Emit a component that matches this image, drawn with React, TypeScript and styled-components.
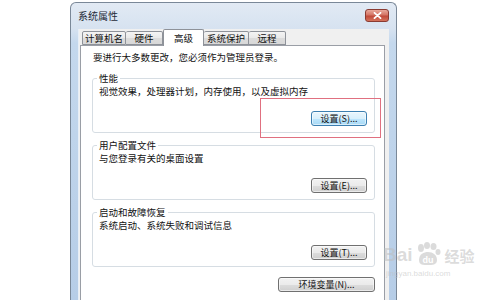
import React from 'react';
import styled, { createGlobalStyle } from 'styled-components';

const GlobalStyle = createGlobalStyle`
  html, body {
    margin: 0;
    padding: 0;
    background: #ffffff;
  }
  body {
    width: 500px;
    height: 300px;
    overflow: hidden;
    position: relative;
    font-family: "Noto Sans CJK SC", "Noto Sans", sans-serif;
    color: #111111;
  }
`;

const Stage = styled.div`
  padding: 2px 0 0 70px;
`;

const Window = styled.div`
  width: 327px;
  height: 298px;
  box-sizing: border-box;
  border: 1px solid #7a8898;
  border-bottom: none;
  border-radius: 6px 6px 0 0;
  background: linear-gradient(#e2eaf4, #d6e2f0 26px, #c4d8ed 40px, #b6cde7);
  padding: 0 7px;
  display: flex;
  flex-direction: column;
  overflow: hidden;
`;

const TitleBar = styled.div`
  height: 26px;
  flex: none;
  display: flex;
  align-items: center;
  justify-content: space-between;
`;

const Title = styled.span`
  font-size: 10px;
  line-height: 12px;
  color: #1e2a38;
`;

const CloseButton = styled.div`
  width: 24px;
  height: 13px;
  box-sizing: border-box;
  margin-top: -1px;
  border: 1px solid #8a3b32;
  border-radius: 3px;
  background: linear-gradient(#e9a99b, #d47565 45%, #c14a3a 55%, #d4735c);
  display: flex;
  align-items: center;
  justify-content: center;
`;

const Client = styled.div`
  flex: 1;
  min-height: 0;
  background: #f0f0f0;
  box-shadow: inset 1px 0 0 #e6eef7;
  padding: 0 4px 0 2px;
  display: flex;
  flex-direction: column;
`;

const TabRow = styled.div`
  height: 16px;
  flex: none;
  display: flex;
  align-items: flex-end;
  padding-left: 2px;
  position: relative;
  z-index: 1;
`;

const Tab = styled.div<{ $active?: boolean; $w: number }>`
  width: ${p => p.$w}px;
  height: ${p => (p.$active ? 17 : 14)}px;
  margin-bottom: ${p => (p.$active ? -1 : 0)}px;
  box-sizing: border-box;
  border: 1px solid #8e9299;
  border-bottom: ${p => (p.$active ? 'none' : '1px solid #8e9299')};
  border-left: ${p => (p.$active ? '1px solid #8e9299' : 'none')};
  border-radius: 2px 2px 0 0;
  background: ${p => (p.$active ? '#ffffff' : 'linear-gradient(#f4f4f4, #e9e9e9 50%, #dcdcdc 51%, #d8d8d8)')};
  font-size: 9.5px;
  line-height: 12px;
  display: flex;
  justify-content: center;
  padding-top: ${p => (p.$active ? 2 : 0)}px;
  &:first-child {
    border-left: 1px solid #8e9299;
  }
`;

const Page = styled.div`
  flex: 1;
  min-height: 0;
  background: #ffffff;
  border: 1px solid #9a9ea6;
  border-bottom: none;
  padding: 5px 9px 0 11px;
  display: flex;
  flex-direction: column;
`;

const Notice = styled.div`
  font-size: 9.5px;
  line-height: 12px;
  padding-left: 1px;
  margin-bottom: 9px;
`;

const Group = styled.fieldset`
  position: relative;
  margin: 0 0 6px;
  padding: 0 7px 6px 4px;
  border: 1px solid #d6dde3;
  border-radius: 3px;
  display: flex;
  flex-direction: column;
`;

const Legend = styled.legend`
  padding: 0 2px;
  font-size: 9.5px;
  line-height: 12px;
`;

const Desc = styled.div`
  font-size: 9.5px;
  line-height: 12px;
  padding-left: 2px;
  margin-top: 1px;
`;

const ButtonRow = styled.div<{ $top: number }>`
  display: flex;
  justify-content: flex-end;
  margin-top: ${p => p.$top}px;
`;

const Button = styled.div<{ $focus?: boolean; $w: number }>`
  width: ${p => p.$w}px;
  height: 15px;
  box-sizing: border-box;
  border: 1px solid ${p => (p.$focus ? '#3c7fb1' : '#707070')};
  border-radius: 3px;
  background: ${p =>
    p.$focus
      ? 'linear-gradient(#eaf6fd, #d9f0fc 50%, #bee6fd 51%, #a7d9f5)'
      : 'linear-gradient(#f2f2f2, #ebebeb 50%, #dddddd 51%, #cfcfcf)'};
  box-shadow: inset 0 0 0 1px rgba(255, 255, 255, 0.55);
  font-size: 9px;
  line-height: 13px;
  display: flex;
  justify-content: center;
  white-space: nowrap;
`;

const Highlight = styled.div`
  position: absolute;
  left: 167px;
  top: 14px;
  width: 119px;
  height: 38px;
  border: 1px solid #e07080;
  pointer-events: none;
`;

const Watermark = styled.div`
  position: absolute;
  left: 383px;
  top: 242px;
  display: flex;
  flex-direction: column;
  color: rgba(190, 190, 190, 0.55);
  font-family: "Liberation Sans", Arial, sans-serif;
  pointer-events: none;
`;

const MarkRow = styled.div`
  display: flex;
  align-items: flex-end;
  gap: 2px;
`;

const MarkWord = styled.span`
  font-size: 19px;
  font-weight: bold;
  line-height: 22px;
`;

const MarkCn = styled.span`
  font-family: "Noto Sans CJK SC", sans-serif;
  font-size: 15px;
  font-weight: bold;
  line-height: 20px;
  margin-left: 2px;
`;

const MarkUrl = styled.span`
  font-size: 8px;
  line-height: 10px;
  margin-top: 3px;
  margin-left: 3px;
`;

const tabs = [
  { name: '计算机名', w: 44 },
  { name: '硬件', w: 37 },
  { name: '高级', w: 41, active: true },
  { name: '系统保护', w: 45 },
  { name: '远程', w: 37 },
];

const groups = [
  { title: '性能', desc: '视觉效果，处理器计划，内存使用，以及虚拟内存', btn: '设置(S)...', focus: true },
  { title: '用户配置文件', desc: '与您登录有关的桌面设置', btn: '设置(E)...' },
  { title: '启动和故障恢复', desc: '系统启动、系统失败和调试信息', btn: '设置(T)...' },
];

const Paw = () => (
  <svg width="26" height="24" viewBox="0 0 26 24">
    <g fill="rgba(190,190,190,0.55)">
      <ellipse cx="6" cy="6" rx="3" ry="4" />
      <ellipse cx="12" cy="3.5" rx="3" ry="3.5" />
      <ellipse cx="18.5" cy="4.5" rx="3" ry="3.5" />
      <ellipse cx="23" cy="10" rx="2.5" ry="3" />
      <path d="M4 18 C4 12 9 10 13 10 C18 10 22 13 22 18 C22 23 17 23 13 23 C8 23 4 23 4 18 Z" />
    </g>
    <text x="13" y="21" textAnchor="middle" fontSize="9" fontFamily="Liberation Sans, Arial, sans-serif" fontWeight="bold" fill="#ffffff">du</text>
  </svg>
);

export default function App() {
  return (
    <>
      <GlobalStyle />
      <Stage>
        <Window>
          <TitleBar>
            <Title>系统属性</Title>
            <CloseButton>
              <svg width="9" height="7" viewBox="0 0 9 7">
                <path d="M1.5 0.8 L7.5 6.2 M7.5 0.8 L1.5 6.2" stroke="#ffffff" strokeWidth="1.8" strokeLinecap="round" />
              </svg>
            </CloseButton>
          </TitleBar>
          <Client>
            <TabRow>
              {tabs.map(t => (
                <Tab key={t.name} $w={t.w} $active={t.active}>
                  {t.name}
                </Tab>
              ))}
            </TabRow>
            <Page>
              <Notice>要进行大多数更改，您必须作为管理员登录。</Notice>
              {groups.map(g => (
                <Group key={g.title}>
                  <Legend>{g.title}</Legend>
                  <Desc>{g.desc}</Desc>
                  <ButtonRow $top={14}>
                    <Button $w={56} $focus={g.focus}>{g.btn}</Button>
                  </ButtonRow>
                  {g.focus && <Highlight />}
                </Group>
              ))}
              <ButtonRow $top={4}>
                <Button $w={97}>环境变量(N)...</Button>
              </ButtonRow>
            </Page>
          </Client>
        </Window>
      </Stage>
      <Watermark>
        <MarkRow>
          <MarkWord>Bai</MarkWord>
          <Paw />
          <MarkCn>经验</MarkCn>
        </MarkRow>
        <MarkUrl>jingyan.baidu.com</MarkUrl>
      </Watermark>
    </>
  );
}
